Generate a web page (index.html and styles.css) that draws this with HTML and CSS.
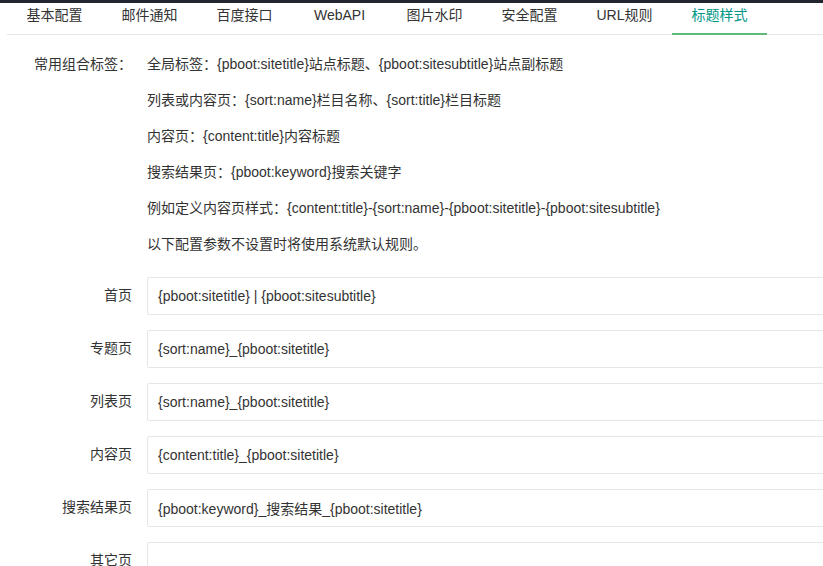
FILE: index.html
```html
<!DOCTYPE html>
<html lang="zh-CN">
<head>
<meta charset="utf-8">
<title>标题样式</title>
<link rel="stylesheet" href="styles.css">
</head>
<body>
<div class="topbar"></div>
<div class="page">
  <ul class="tabs">
    <li>基本配置</li>
    <li>邮件通知</li>
    <li>百度接口</li>
    <li>WebAPI</li>
    <li>图片水印</li>
    <li>安全配置</li>
    <li>URL规则</li>
    <li class="active">标题样式</li>
  </ul>
  <form class="form">
    <div class="form-item">
      <label class="form-label">常用组合标签：</label>
      <div class="input-block tips">
        <div class="tip">全局标签：{pboot:sitetitle}站点标题、{pboot:sitesubtitle}站点副标题</div>
        <div class="tip">列表或内容页：{sort:name}栏目名称、{sort:title}栏目标题</div>
        <div class="tip">内容页：{content:title}内容标题</div>
        <div class="tip">搜索结果页：{pboot:keyword}搜索关键字</div>
        <div class="tip">例如定义内容页样式：{content:title}-{sort:name}-{pboot:sitetitle}-{pboot:sitesubtitle}</div>
        <div class="tip">以下配置参数不设置时将使用系统默认规则。</div>
      </div>
    </div>
    <div class="form-item">
      <label class="form-label">首页</label>
      <div class="input-block"><input class="input" type="text" value="{pboot:sitetitle} | {pboot:sitesubtitle}"></div>
    </div>
    <div class="form-item">
      <label class="form-label">专题页</label>
      <div class="input-block"><input class="input" type="text" value="{sort:name}_{pboot:sitetitle}"></div>
    </div>
    <div class="form-item">
      <label class="form-label">列表页</label>
      <div class="input-block"><input class="input" type="text" value="{sort:name}_{pboot:sitetitle}"></div>
    </div>
    <div class="form-item">
      <label class="form-label">内容页</label>
      <div class="input-block"><input class="input" type="text" value="{content:title}_{pboot:sitetitle}"></div>
    </div>
    <div class="form-item">
      <label class="form-label">搜索结果页</label>
      <div class="input-block"><input class="input" type="text" value="{pboot:keyword}_搜索结果_{pboot:sitetitle}"></div>
    </div>
    <div class="form-item">
      <label class="form-label">其它页</label>
      <div class="input-block"><input class="input" type="text" value=""></div>
    </div>
  </form>
</div>
</body>
</html>
```

FILE: styles.css
```css
html, body {
  margin: 0;
  padding: 0;
  height: 100%;
  overflow: hidden;
  background: #fff;
}
body {
  font-family: "Liberation Sans", Arial, "Noto Sans CJK SC", sans-serif;
  font-size: 14px;
  color: #333;
}
.topbar {
  height: 3px;
  background: #23262e;
}
.page {
  padding-left: 7px;
}
.tabs {
  display: flex;
  margin: 0;
  padding: 0;
  list-style: none;
  height: 31px;
  border-bottom: 1px solid #e6e6e6;
}
.tabs li {
  position: relative;
  min-width: 65px;
  padding: 0 15px;
  line-height: 24px;
  text-align: center;
  color: #333;
  white-space: nowrap;
}
.tabs li.active {
  color: #009688;
}
.tabs li.active::after {
  content: "";
  position: absolute;
  left: 0;
  right: 0;
  bottom: -1px;
  height: 2px;
  background: #5fb878;
}
.form {
  padding-top: 11px;
  margin-right: -20px;
}
.form-item {
  display: flex;
  margin-bottom: 15px;
}
.form-label {
  flex: 0 0 125px;
  padding: 8px 15px 8px 0;
  line-height: 20px;
  text-align: right;
  white-space: nowrap;
}
.form-item .form-label {
  box-sizing: content-box;
}
.input-block {
  flex: 1;
  min-width: 0;
}
.tip {
  padding: 8px 0;
  line-height: 20px;
  white-space: nowrap;
}
.input {
  display: block;
  box-sizing: border-box;
  width: 100%;
  height: 38px;
  margin: 0;
  padding: 0 10px;
  border: 1px solid #e6e6e6;
  border-radius: 2px;
  font-family: inherit;
  font-size: 14px;
  color: #333;
  background: #fff;
  outline: none;
}
```
